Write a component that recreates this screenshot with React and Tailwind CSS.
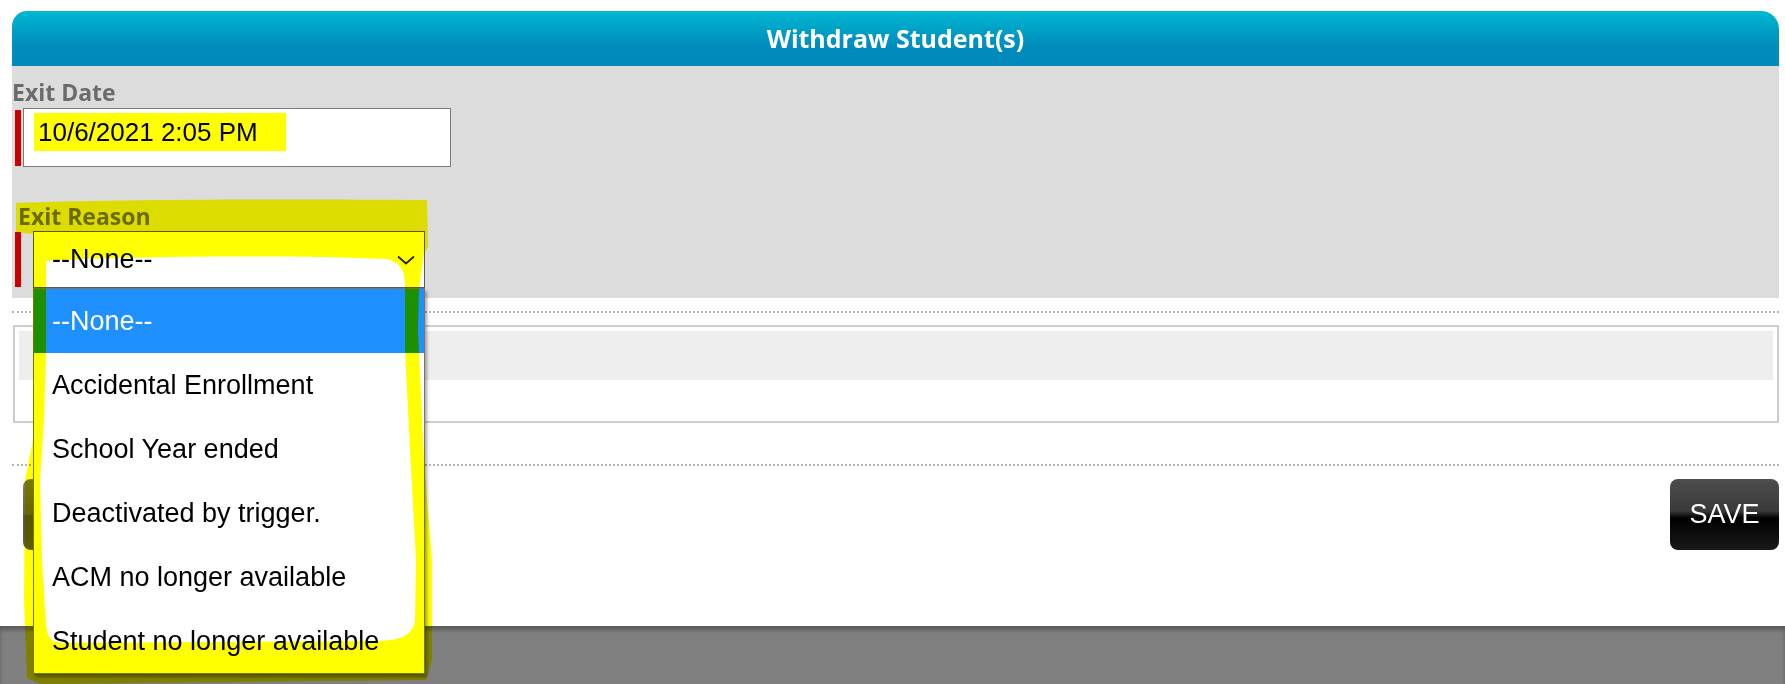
import React from 'react';

const options = [
  '--None--',
  'Accidental Enrollment',
  'School Year ended',
  'Deactivated by trigger.',
  'ACM no longer available',
  'Student no longer available',
];

// freehand highlighter marks drawn over the open select
function Highlighter() {
  const outer =
    'M16,203 C120,199 300,199 427,200 L428,248 L424,252 L419,290 L418,330 L424,460 L432,560 L432,660 L426,680 L40,684 L27,678 L24,600 L25,480 L30,455 L33,440 L33,234 L16,232 Z';
  const inner =
    'M46,261 C120,256 300,255 385,259 C400,261 405,271 405,284 L405,350 L410,450 L416,560 L415,620 C413,636 400,640 380,641 L60,643 C50,642 47,635 46,625 L42,560 L40,480 L44,420 L46,350 Z';
  return (
    <svg
      className="absolute left-0 top-0 z-20 pointer-events-none mix-blend-multiply"
      width="1785"
      height="684"
      viewBox="0 0 1785 684"
    >
      <path d={outer + ' ' + inner} fill="#ffff00" fillRule="evenodd" />
    </svg>
  );
}

export default function App() {
  return (
    <div className="relative w-[1785px] h-[684px] overflow-hidden bg-white flex flex-col font-['Liberation_Sans',Arial,sans-serif]">
      <div className="flex-1 pt-[11px] pl-[12px] pr-[6px]">
        {/* title bar */}
        <div className="h-[55px] rounded-tl-[15px] rounded-tr-[18px] bg-[linear-gradient(to_bottom,#00b8d1,#008bbc_65%,#008abb)] flex items-center justify-center">
          <span className="font-['Open_Sans',sans-serif] font-bold text-[25px] leading-none text-white">
            Withdraw Student(s)
          </span>
        </div>

        {/* form panel */}
        <div className="h-[232px] bg-[#dcdcdc] pt-[15px]">
          <div className="font-['Open_Sans',sans-serif] font-bold text-[23px] leading-none text-[#6b6b6b]">
            Exit Date
          </div>
          <div className="mt-[4px] flex items-center">
            <div className="ml-[3px] w-[6px] h-[56px] bg-[#cc0000]" />
            <div className="ml-[2px] w-[428px] h-[59px] bg-white border border-[#7a7a7a] pl-[10px] pt-[4px]">
              <span className="inline-block w-[252px] h-[38px] bg-[#ffff00] pl-[4px] text-[26px] leading-[38px] text-black">
                10/6/2021 2:05 PM
              </span>
            </div>
          </div>

          <div className="mt-[38px] pl-[6px] font-['Open_Sans',sans-serif] font-bold text-[23px] leading-none text-[#6b6b6b]">
            Exit Reason
          </div>
          <div className="mt-[3px] flex items-center">
            <div className="ml-[3px] w-[6px] h-[55px] bg-[#cc0000]" />
            <div className="relative ml-[12px] w-[392px] h-[57px] bg-white border border-[#5a5a5a] flex items-center justify-between pl-[18px] pr-[9px]">
              <span className="text-[27px] leading-none text-black">--None--</span>
              <svg width="18" height="10" viewBox="0 0 18 10" fill="none">
                <path d="M1 1.5 L9 8.5 L17 1.5" stroke="#222" strokeWidth="1.7" />
              </svg>

              {/* open option list */}
              <div className="absolute top-[56px] -left-[1px] z-10 w-[392px] bg-white border border-[#767676] shadow-[2px_3px_3px_rgba(0,0,0,0.35)]">
                {options.map((o, i) => (
                  <div
                    key={o}
                    className={
                      i === 0
                        ? 'h-[64px] flex items-center pl-[18px] bg-[#1e90ff] text-white text-[27px]'
                        : 'h-[64px] flex items-center pl-[18px] text-black text-[27px]'
                    }
                  >
                    {o}
                  </div>
                ))}
              </div>
            </div>
          </div>
        </div>

        <div className="mt-[13px] border-t-2 border-dotted border-[#b4b4b4]" />

        <div className="mt-[12px] ml-[1px] h-[98px] border-2 border-[#cccccc] p-[4px]">
          <div className="h-[49px] bg-[#eeeeee]" />
        </div>

        <div className="mt-[41px] border-t-2 border-dotted border-[#b4b4b4]" />

        <div className="mt-[13px] flex justify-between">
          <div className="ml-[11px] w-[130px] h-[71px] rounded-[8px] bg-[linear-gradient(to_bottom,#7a7a7a,#666_50%,#555_51%,#5e5e5e)]" />
          <button className="w-[109px] h-[71px] rounded-[8px] bg-[linear-gradient(to_bottom,#4d4d4d,#3a3a3a_45%,#000_55%,#1a1a1a)] text-white text-[27px] leading-none">
            SAVE
          </button>
        </div>
      </div>

      <div className="h-[58px] bg-[#808080] shadow-[inset_0_4px_4px_rgba(0,0,0,0.3)]" />

      <Highlighter />
    </div>
  );
}
